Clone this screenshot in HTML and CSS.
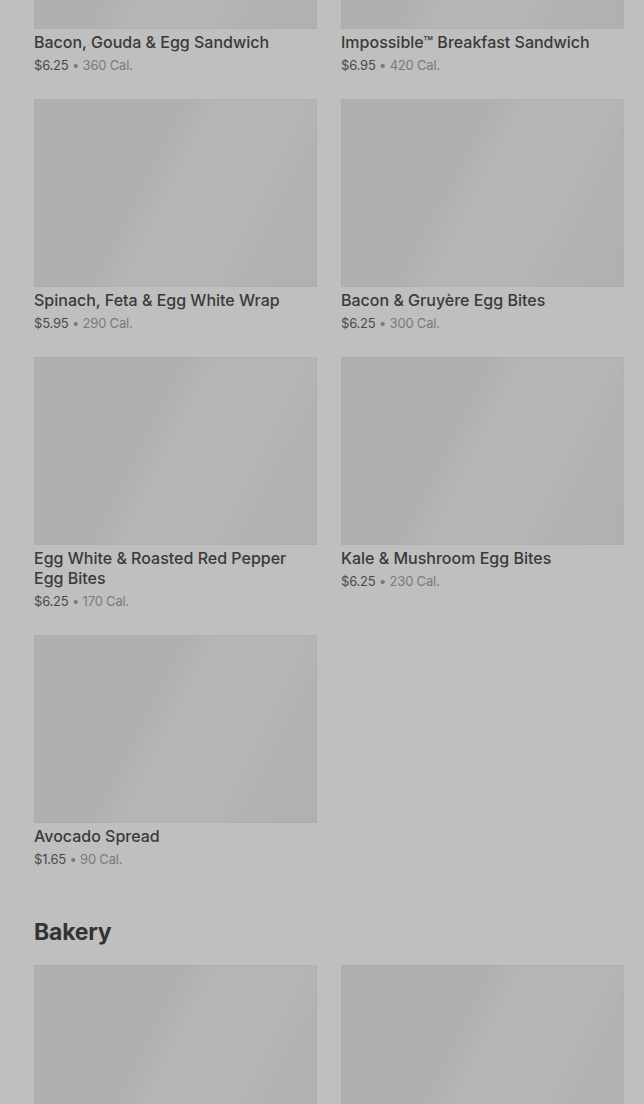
FILE: index.html
```html
<!DOCTYPE html>
<html lang="en">
<head>
<meta charset="utf-8">
<title>Menu</title>
<link rel="stylesheet" href="styles.css">
</head>
<body>
<main class="menu">
  <section class="category">
    <div class="grid">
      <article class="item">
        <div class="thumb"></div>
        <h3 class="name">Bacon, Gouda &amp; Egg Sandwich</h3>
        <p class="meta"><span class="price">$6.25</span> <span class="cal">• 360 Cal.</span></p>
      </article>
      <article class="item">
        <div class="thumb"></div>
        <h3 class="name">Impossible™ Breakfast Sandwich</h3>
        <p class="meta"><span class="price">$6.95</span> <span class="cal">• 420 Cal.</span></p>
      </article>
      <article class="item">
        <div class="thumb"></div>
        <h3 class="name">Spinach, Feta &amp; Egg White Wrap</h3>
        <p class="meta"><span class="price">$5.95</span> <span class="cal">• 290 Cal.</span></p>
      </article>
      <article class="item">
        <div class="thumb"></div>
        <h3 class="name">Bacon &amp; Gruyère Egg Bites</h3>
        <p class="meta"><span class="price">$6.25</span> <span class="cal">• 300 Cal.</span></p>
      </article>
      <article class="item">
        <div class="thumb"></div>
        <h3 class="name">Egg White &amp; Roasted Red Pepper Egg Bites</h3>
        <p class="meta"><span class="price">$6.25</span> <span class="cal">• 170 Cal.</span></p>
      </article>
      <article class="item">
        <div class="thumb"></div>
        <h3 class="name">Kale &amp; Mushroom Egg Bites</h3>
        <p class="meta"><span class="price">$6.25</span> <span class="cal">• 230 Cal.</span></p>
      </article>
      <article class="item">
        <div class="thumb"></div>
        <h3 class="name">Avocado Spread</h3>
        <p class="meta"><span class="price">$1.65</span> <span class="cal">• 90 Cal.</span></p>
      </article>
    </div>
  </section>
  <section class="category">
    <h2 class="heading">Bakery</h2>
    <div class="grid">
      <article class="item">
        <div class="thumb"></div>
      </article>
      <article class="item">
        <div class="thumb"></div>
      </article>
    </div>
  </section>
</main>
</body>
</html>
```
FILE: styles.css
```css
html, body {
  margin: 0;
  padding: 0;
  background: #bfbfbf;
  font-family: Inter, "Noto Sans", "Liberation Sans", sans-serif;
}

.menu {
  margin-top: -159px;
  padding: 0 20px 0 34px;
}

.category + .category {
  margin-top: 48px;
}

.heading {
  margin: 0 0 17px;
  font-size: 23px;
  line-height: 32px;
  font-weight: 700;
  color: #333333;
  letter-spacing: -0.2px;
}

.grid {
  display: grid;
  grid-template-columns: 283px 283px;
  column-gap: 24px;
  row-gap: 25px;
}

.thumb {
  height: 188px;
  background: linear-gradient(117deg, #b0b0b0 0%, #b0b0b0 40%, #b6b6b6 50%, #b6b6b6 70%, #b2b2b2 80%, #b0b0b0 100%);
  box-shadow: inset 0 0 0 1px rgba(0, 0, 0, 0.015);
}

.name {
  margin: 3px 0 0;
  font-size: 16px;
  line-height: 20px;
  font-weight: 500;
  color: #3a3a3a;
}

.meta {
  margin: 4px 0 0;
  font-size: 13px;
  line-height: 18px;
  letter-spacing: -0.2px;
}

.price {
  color: #4a4a4a;
}

.cal {
  color: #7a7a7a;
}
```
